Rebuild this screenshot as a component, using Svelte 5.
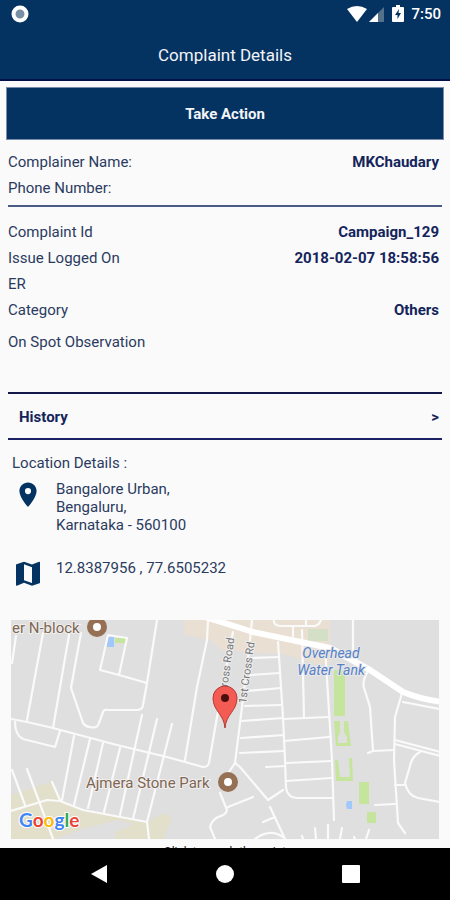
<script>
  const person = [
    { label: 'Complainer Name:', value: 'MKChaudary' },
    { label: 'Phone Number:', value: '' }
  ]

  const complaint = [
    { label: 'Complaint Id', value: 'Campaign_129' },
    { label: 'Issue Logged On', value: '2018-02-07 18:58:56' },
    { label: 'ER', value: '' },
    { label: 'Category', value: 'Others' }
  ]

  const address = ['Bangalore Urban,', 'Bengaluru,', 'Karnataka - 560100']

  const roads = [
    'M16 636L12 663',
    'M43 633L27 720',
    'M69 635L53 728',
    'M81 633L76 660L71 688L83 723Q86 727 90 727Q97 729 99 723L103 712Q104 709 108 710L138 710Q143 709 143 705L147 683L157 620',
    'M119 675L127 638L108 635L100 670L119 675L147 683',
    'M11 719L27 722L53 728L117 745L167 757L203 767Q208 767 209 763L217 717L233 632',
    'M208 620L207 640L197 687L185 760',
    'M15 722Q15 735 23 739L55 747L60 731',
    'M74 736L62 800',
    'M90 739L74 805',
    'M103 743L88 808',
    'M120 748L104 812',
    'M142 715L120 815',
    'M157 719L133 819',
    'M172 724L147 822L149 839',
    'M11 811L47 800L60 801L83 810L147 822',
    'M12 770L25 805',
    'M27 769L53 839',
    'M52 782L60 800',
    'M220 793L227 810Q226 815 218 817Q212 820 210 827L215 839',
    'M228 807L253 797',
    'M252 620L249 650L242 707L235 763L227 775',
    'M235 763L240 767L268 800L283 790',
    'M278 642L283 717L285 760L286 788Q288 798 297 798L332 798',
    'M250 658L279 657M250 675L280 673M247 691L281 688M245 706L282 705M242 721L283 718M241 738L284 735M240 753L284 751',
    'M302 630L304 717',
    'M325 647L332 760L334 820',
    'M283 719L328 717M284 741L329 737M286 763L331 761M286 781L331 778M266 767L285 766',
    'M274 620Q273 625 280 626L315 626Q319 625 321 620M306 620L306 626M293 627L293 636',
    'M270 807L285 839M263 822L275 817M255 839Q270 828 283 837',
    'M353 620L353 655',
    'M367 673Q361 683 365 691L370 707L373 751L394 750M368 753L373 751',
    'M402 693L395 717L394 760L398 823L405 833',
    'M403 702L440 709M395 740L440 752M395 744L440 756',
    'M420 752Q412 756 410 766L405 783Q408 796 418 798L440 802',
    'M395 785L405 785M375 805L395 804',
    'M315 828L316 839M328 825L328 839M342 828L340 839M369 830L366 839M302 836L303 839M354 837L355 839'
  ]
</script>

<div class="screen">
  <header>
    <div class="status">
      <svg width="18" height="18" viewBox="0 0 18 18" aria-hidden="true">
        <circle cx="9" cy="9" r="6.5" fill="#7890a4" stroke="#fff" stroke-width="4" />
      </svg>
      <div class="status-icons">
        <svg width="38" height="18" viewBox="0 0 38 18" aria-hidden="true">
          <path d="M0 4Q10-2 20 4L10 17Z" fill="#fff" />
          <path d="M37 2V17H22Z" fill="#54718c" />
          <path d="M31 8V17H22Z" fill="#fff" />
        </svg>
        <svg width="12" height="18" viewBox="0 0 12 18" aria-hidden="true">
          <path d="M4 0h4v2h3q1 0 1 1v13q0 1-1 1H1q-1 0-1-1V3q0-1 1-1h3z" fill="#fff" />
          <path d="M7 4L3 10h2.500v4L9 8H6.500z" fill="#053361" />
        </svg>
        <span>7:50</span>
      </div>
    </div>
    <h1>Complaint Details</h1>
  </header>

  <main>
    <button class="action">Take Action</button>

    <dl class="person">
      {#each person as row}
        <div class="row">
          <dt>{row.label}</dt>
          <dd>{row.value}</dd>
        </div>
      {/each}
    </dl>

    <dl class="complaint">
      {#each complaint as row}
        <div class="row">
          <dt>{row.label}</dt>
          <dd>{row.value}</dd>
        </div>
      {/each}
    </dl>
    <p class="observation">On Spot Observation</p>

    <button class="history">
      <span>History</span>
      <span>&gt;</span>
    </button>

    <section class="location">
      <h2>Location Details :</h2>
      <div class="place">
        <svg width="32" height="32" viewBox="0 0 24 26" aria-hidden="true">
          <path d="M12 2C8.130 2 5 5.130 5 9c0 5.250 7 13 7 13s7-7.750 7-13c0-3.870-3.130-7-7-7zm0 9.500a2.500 2.500 0 0 1 0-5 2.500 2.500 0 0 1 0 5z" fill="#053361" />
        </svg>
        <address>
          {#each address as line}
            <span>{line}</span>
          {/each}
        </address>
      </div>
      <div class="place coords">
        <svg width="32" height="32" viewBox="0 1 24 24" aria-hidden="true">
          <path d="M20.500 3l-.16.03L15 5.100 9 3 3.360 4.900c-.21.07-.36.25-.36.48V20.500c0 .28.22.5.5.5l.16-.03L9 18.900l6 2.100 5.640-1.900c.21-.07.36-.25.36-.48V3.500c0-.28-.22-.5-.5-.5zM15 19l-6-2.110V5l6 2.110V19z" fill="#053361" />
        </svg>
        <span>12.8387956 , 77.6505232</span>
      </div>

      <svg class="map" viewBox="11 620 428 219" preserveAspectRatio="xMidYMid slice" role="img" aria-label="Map of the complaint location">
        <rect x="11" y="620" width="428" height="219" fill="#dfdfdf" />
        <path d="M184 620H330V664H318L282 654L222 650L210 640L185 635Z" fill="#e9dfd2" />
        <path d="M11 795L50 782L64 801L85 810L146 822L165 813L172 818L164 839H115V832L135 824L118 820L85 828L55 839H11Z" fill="#e2dfcb" />
        <rect x="308" y="629" width="20" height="12" fill="#d4dfc7" />
        <g fill="#c5e59c">
          <rect x="115" y="638" width="11" height="5" />
          <rect x="334" y="670" width="11" height="46" />
          <path d="M334 721H340V732L338 737V743H347V737L344 732V721H348L351 746H336Z" />
          <path d="M335 760H338L340 777H350L349 758H352L353 781H336Z" />
          <rect x="359" y="782" width="10" height="22" />
          <rect x="367" y="812" width="9" height="11" />
        </g>
        <g fill="#a0c8fa">
          <rect x="107" y="637" width="7" height="10" />
          <path d="M347 801h5v8h-5l-1-4z" />
        </g>
        <g fill="none" stroke="#fafafa" stroke-width="2.200" stroke-linecap="round" stroke-linejoin="round">
          {#each roads as d}
            <path {d} />
          {/each}
          <path d="M205 617L253 632L330 648L370 670L403 692Q420 699 442 702" stroke="#fff" stroke-width="6" />
        </g>

        <g class="street">
          <text transform="translate(224 712) rotate(-82)">1st Cross Road</text>
          <text transform="translate(246 704) rotate(-82)">1st Cross Rd</text>
        </g>
        <g class="poi">
          <text x="12" y="633">er N-block</text>
          <text x="86" y="788">Ajmera Stone Park</text>
        </g>
        <g class="water">
          <text x="331" y="658">Overhead</text>
          <text x="331" y="675">Water Tank</text>
        </g>
        <g fill="#fff" stroke="#957055" stroke-width="6">
          <circle cx="97" cy="627" r="7" />
          <circle cx="228" cy="782" r="7" />
        </g>
        <path d="M225 728C224 714 213 711 213 698a12 12 0 0 1 24 0C237 711 226 714 225 728Z" fill="#f35b53" stroke="#b33a34" />
        <circle cx="225" cy="698" r="4" fill="#4a1010" />
        <text class="google" x="19" y="827"><tspan fill="#4285f4">G</tspan><tspan fill="#ea4335">o</tspan><tspan fill="#fbbc05">o</tspan><tspan fill="#4285f4">g</tspan><tspan fill="#34a853">l</tspan><tspan fill="#ea4335">e</tspan></text>
      </svg>
      <p class="hint">Click to reach the point</p>
    </section>
  </main>

  <nav>
    <button aria-label="Back">
      <svg width="18" height="20" viewBox="0 0 18 20"><path d="M17 1V19L1 10Z" fill="#fff" /></svg>
    </button>
    <button aria-label="Home">
      <svg width="18" height="18" viewBox="0 0 18 18"><circle cx="9" cy="9" r="9" fill="#fff" /></svg>
    </button>
    <button aria-label="Recent apps">
      <svg width="18" height="18" viewBox="0 0 18 18"><rect width="18" height="18" rx="1" fill="#fff" /></svg>
    </button>
  </nav>
</div>

<style>
  :global(body) {
    margin: 0;
  }
  .screen {
    display: flex;
    flex-direction: column;
    height: 100vh;
    background: #fafafa;
    color: #2b3a60;
    font-family: Roboto, sans-serif;
    font-size: 15px;
    line-height: 18px;
  }
  button {
    padding: 0;
    border: 0;
    background: none;
    font: inherit;
    cursor: pointer;
  }
  svg {
    display: block;
    flex: none;
  }
  h1,
  h2,
  p,
  dl,
  dd {
    margin: 0;
  }
  header {
    flex: none;
    background: #053361;
    border-bottom: 2px solid #02104a;
    color: #f2f4f8;
  }
  .status {
    display: flex;
    align-items: center;
    justify-content: space-between;
    height: 28px;
    padding: 0 9px 0 11px;
  }
  .status-icons {
    display: flex;
    align-items: center;
    gap: 7px;
    font-weight: 500;
    color: #fff;
  }
  h1 {
    padding: 15px 0 12px;
    font-size: 17px;
    font-weight: 400;
    line-height: 24px;
    text-align: center;
  }
  main {
    flex: 1;
    min-height: 0;
    overflow-y: auto;
    scrollbar-width: none;
    padding: 6px 8px 0;
  }
  .action {
    display: block;
    width: calc(100% + 4px);
    height: 53px;
    margin: 0 -2px 9px;
    border: 1px solid #7a8cab;
    background: #053361;
    color: #f2f4f8;
    font-weight: 700;
  }
  .row {
    display: flex;
    justify-content: space-between;
    padding: 4px 3px 4px 0;
  }
  dd {
    font-weight: 700;
    color: #14245a;
  }
  .person {
    padding-bottom: 4px;
    border-bottom: 2px solid #4a5c85;
  }
  .complaint {
    padding-top: 12px;
  }
  .observation {
    padding: 10px 0 41px;
  }
  .history {
    display: flex;
    align-items: center;
    justify-content: space-between;
    width: 100%;
    height: 48px;
    padding: 2px 3px 0 11px;
    border-top: 2px solid #14174a;
    border-bottom: 2px solid #1c2266;
    color: #14245a;
    font-weight: 700;
  }
  .location {
    padding: 14px 3px;
  }
  h2 {
    padding: 0 1px 8px;
    font-size: 15px;
    font-weight: 400;
  }
  .place {
    display: flex;
    gap: 12px;
    padding-left: 1px;
  }
  address {
    display: flex;
    flex-direction: column;
    font-style: normal;
  }
  .coords {
    padding-top: 25px;
    padding-bottom: 29px;
  }
  .map {
    width: 100%;
    height: auto;
  }
  .poi {
    fill: #806653;
    font-size: 15px;
    stroke: #f0f0f0;
    stroke-width: 2px;
    paint-order: stroke;
  }
  .water {
    fill: #5580c8;
    font-size: 14px;
    font-style: italic;
    text-anchor: middle;
    stroke: #e8e8e8;
    stroke-width: 2px;
    paint-order: stroke;
  }
  .street {
    fill: #777;
    font-size: 11px;
    stroke: #eee;
    stroke-width: 2px;
    paint-order: stroke;
  }
  .google {
    font-family: Lato, sans-serif;
    font-size: 19px;
    font-weight: 700;
    stroke: #fff;
    stroke-width: 2px;
    paint-order: stroke;
  }
  .hint {
    padding-top: 4px;
    font-size: 12px;
    text-align: center;
    color: #222;
  }
  nav {
    display: flex;
    flex: none;
    align-items: center;
    justify-content: space-around;
    height: 52px;
    padding: 0 36px;
    background: #000;
  }
  nav button {
    display: flex;
    align-items: center;
    justify-content: center;
    width: 40px;
    height: 40px;
  }
</style>
